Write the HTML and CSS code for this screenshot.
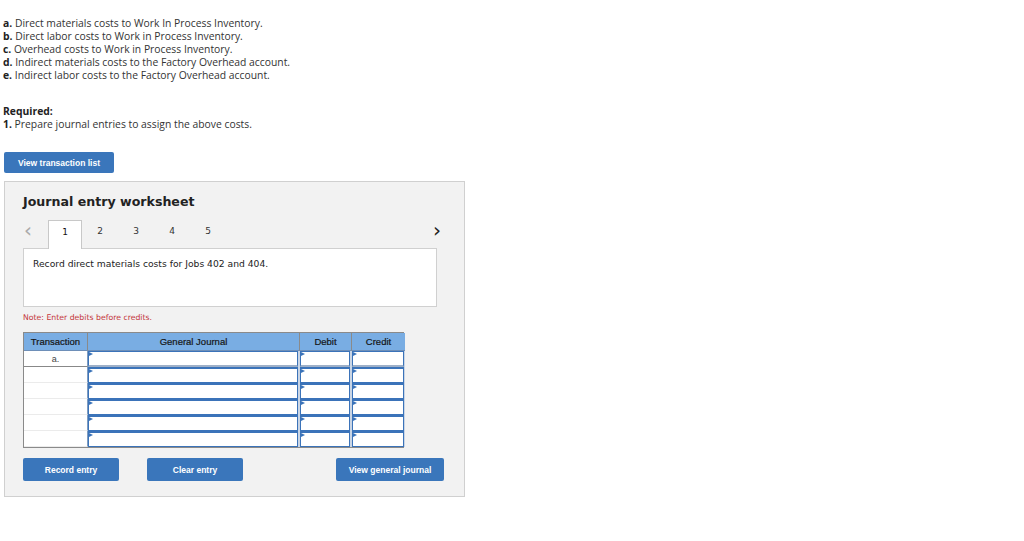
FILE: index.html
```html
<!DOCTYPE html>
<html>
<head>
<meta charset="utf-8">
<link rel="stylesheet" href="styles.css">
</head>
<body>
<div class="intro">
  <p class="line"><b>a.</b> Direct materials costs to Work In Process Inventory.</p>
  <p class="line"><b>b.</b> Direct labor costs to Work in Process Inventory.</p>
  <p class="line"><b>c.</b> Overhead costs to Work in Process Inventory.</p>
  <p class="line"><b>d.</b> Indirect materials costs to the Factory Overhead account.</p>
  <p class="line"><b>e.</b> Indirect labor costs to the Factory Overhead account.</p>
  <p class="line req"><b>Required:</b></p>
  <p class="line"><b>1.</b> Prepare journal entries to assign the above costs.</p>
</div>
<button class="btn btn-list">View transaction list</button>
<div class="ws">
  <h2 class="ws-title">Journal entry worksheet</h2>
  <div class="tabs">
    <span class="chev chev-left">&lsaquo;</span>
    <span class="tab active">1</span>
    <span class="tab">2</span>
    <span class="tab">3</span>
    <span class="tab">4</span>
    <span class="tab">5</span>
    <span class="chev chev-right">&rsaquo;</span>
  </div>
  <div class="prompt">Record direct materials costs for Jobs 402 and 404.</div>
  <div class="note">Note: Enter debits before credits.</div>
  <div class="table">
    <div class="th">Transaction</div>
    <div class="th">General Journal</div>
    <div class="th">Debit</div>
    <div class="th">Credit</div>

    <div class="tc first">a.</div>
    <div class="ic first"><span class="box"></span></div>
    <div class="ic first"><span class="box"></span></div>
    <div class="ic first last"><span class="box"></span></div>

    <div class="tc"></div>
    <div class="ic"><span class="box"></span></div>
    <div class="ic"><span class="box"></span></div>
    <div class="ic last"><span class="box"></span></div>

    <div class="tc"></div>
    <div class="ic"><span class="box"></span></div>
    <div class="ic"><span class="box"></span></div>
    <div class="ic last"><span class="box"></span></div>

    <div class="tc"></div>
    <div class="ic"><span class="box"></span></div>
    <div class="ic"><span class="box"></span></div>
    <div class="ic last"><span class="box"></span></div>

    <div class="tc"></div>
    <div class="ic"><span class="box"></span></div>
    <div class="ic"><span class="box"></span></div>
    <div class="ic last"><span class="box"></span></div>

    <div class="tc"></div>
    <div class="ic"><span class="box"></span></div>
    <div class="ic"><span class="box"></span></div>
    <div class="ic last"><span class="box"></span></div>
  </div>
  <div class="actions">
    <button class="btn btn-act">Record entry</button>
    <button class="btn btn-act btn-clear">Clear entry</button>
    <button class="btn btn-act btn-view">View general journal</button>
  </div>
</div>
</body>
</html>
```

FILE: styles.css
```css
* { box-sizing: border-box; }
body {
  margin: 0;
  background: #fff;
  font-family: "Open Sans", "Liberation Sans", sans-serif;
  color: #333;
}
.intro {
  padding: 17px 0 0 3px;
}
.line {
  margin: 0;
  font-size: 10.35px;
  line-height: 13px;
  white-space: nowrap;
}
.line b { font-weight: 700; color: #222; }
.req { margin-top: 23px; }

.btn {
  display: flex;
  align-items: center;
  justify-content: center;
  border: none;
  border-radius: 2px;
  background: #3a76bb;
  color: #fff;
  font-family: "Liberation Sans", Arial, sans-serif;
  font-weight: 700;
  font-size: 8.5px;
  padding: 0;
  cursor: pointer;
}
.btn-list {
  margin: 21px 0 0 4px;
  width: 110px;
  height: 21px;
}

.ws {
  margin: 8px 0 0 4px;
  width: 461px;
  height: 316px;
  border: 1px solid #d0d0d0;
  background: #f2f2f2;
  padding: 12px 20px 0 18px;
  font-family: "DejaVu Sans", Verdana, sans-serif;
}
.ws-title {
  margin: 0;
  font-size: 12.6px;
  line-height: 16px;
  font-weight: 700;
  color: #222;
}
.tabs {
  display: flex;
  align-items: stretch;
  height: 28px;
  margin-top: 10px;
}
.chev {
  display: flex;
  align-items: center;
  justify-content: center;
  font-size: 20px;
  line-height: 1;
  padding-bottom: 8px;
}
.chev-left { width: 25px; color: #aaa; justify-content: flex-start; padding-left: 1px; }
.chev-right { width: 14px; margin-left: auto; color: #222; }
.tab {
  width: 36px;
  display: flex;
  align-items: center;
  justify-content: center;
  font-size: 9px;
  color: #333;
  padding-bottom: 6px;
}
.tab.active {
  width: 34px;
  background: #fff;
  border: 1px solid #c8c8c8;
  border-bottom: none;
  height: 29px;
  position: relative;
  z-index: 1;
  color: #111;
  padding-bottom: 7px;
}
.prompt {
  width: 414px;
  height: 59px;
  background: #fff;
  border: 1px solid #d0d0d0;
  padding: 9px 9px 0 9px;
  font-size: 9.2px;
  line-height: 12px;
  color: #222;
}
.note {
  margin-top: 5px;
  font-size: 7.75px;
  line-height: 11px;
  color: #c4373a;
}
.table {
  margin-top: 9px;
  width: 381px;
  display: grid;
  grid-template-columns: 64px 212px 52px 53px;
  grid-template-rows: 18px repeat(6, 16px);
  border: 1px solid #8a8a8a;
  background: #fff;
  font-family: "Liberation Sans", Arial, sans-serif;
}
.th {
  background: #79ade3;
  border-right: 1px solid #8a8a8a;
  border-bottom: 1px solid #6e8fb8;
  display: flex;
  align-items: center;
  justify-content: center;
  font-size: 9.5px;
  color: #151515;
  -webkit-text-stroke: 0.2px #151515;
}
.th:nth-child(4) { border-right: none; }
.tc {
  border-right: 1px solid #7f9cc0;
  border-bottom: 1px solid #ebebeb;
  font-size: 9px;
  color: #444;
  display: flex;
  align-items: center;
  justify-content: center;
  background: #fff;
}
.tc.first { border-bottom: 1px solid #888; }
.ic {
  background: #c9d5e5;
  padding: 0 2px 0 0;
  display: flex;
}
.ic.last { padding-right: 1px; }
.box {
  flex: 1;
  position: relative;
  background: #fff;
  border: 1px solid #3b73b9;
  border-top: 2px solid #3b73b9;
}
.ic.first .box {
  border-top: 1px solid #3b73b9;
  border-bottom: 2px solid #9eb0c8;
}
.box::before {
  content: "";
  position: absolute;
  left: 0;
  top: 0;
  border-left: 4px solid #3b73b9;
  border-top: 2px solid transparent;
  border-bottom: 2px solid transparent;
}
.actions {
  display: flex;
  margin-top: 10px;
}
.btn-act {
  width: 96px;
  height: 23px;
}
.btn-clear { margin-left: 28px; }
.btn-view { margin-left: auto; width: 108px; }
```
